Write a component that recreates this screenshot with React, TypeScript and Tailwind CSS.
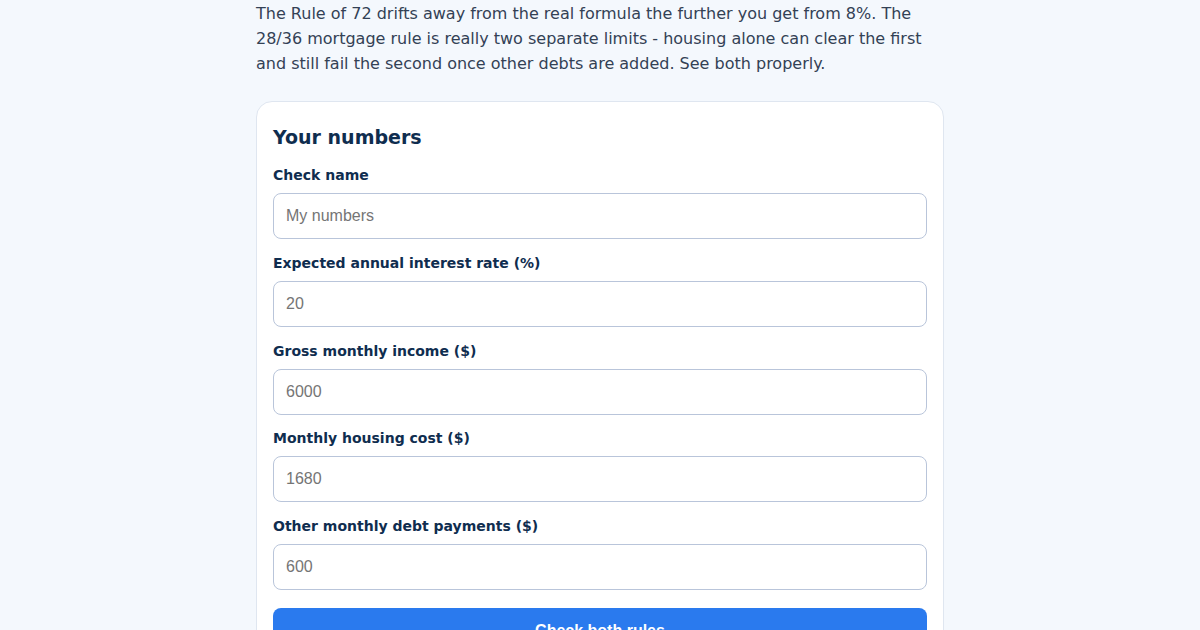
import React from 'react';

const fields = [
  { label: 'Check name', placeholder: 'My numbers' },
  { label: 'Expected annual interest rate (%)', placeholder: '20' },
  { label: 'Gross monthly income ($)', placeholder: '6000' },
  { label: 'Monthly housing cost ($)', placeholder: '1680' },
  { label: 'Other monthly debt payments ($)', placeholder: '600' },
];

const App = () => {
  return (
    <div className="min-h-screen bg-[#f4f8fd] font-['DejaVu_Sans',sans-serif]">
      <div className="w-[688px] mx-auto pt-px">
        {/* Intro */}
        <p className="text-[16px] leading-[25px] text-[#334155] mb-[25px]">
          The Rule of 72 drifts away from the real formula the further you get from 8%. The
          28/36 mortgage rule is really two separate limits - housing alone can clear the first
          and still fail the second once other debts are added. See both properly.
        </p>

        {/* Form card */}
        <div className="bg-white border border-[#dfe6f0] rounded-2xl px-4 pt-[21px] pb-4">
          <h2 className="text-[19px] leading-[28px] font-bold text-[#0f2d4f] mb-[14px]">
            Your numbers
          </h2>

          <div className="flex flex-col gap-[13.75px]">
            {fields.map((f) => (
              <div key={f.label}>
                <label className="block text-[14px] leading-[20px] font-bold text-[#0f2d4f] mb-2">
                  {f.label}
                </label>
                <input
                  type="text"
                  placeholder={f.placeholder}
                  className="block w-full h-[46px] px-[12px] rounded-lg border border-[#b9c5da] bg-white text-[16px] font-['Liberation_Sans',Arial,sans-serif] placeholder:text-[#757575] outline-none"
                />
              </div>
            ))}
          </div>

          <button className="mt-[18px] w-full h-[46px] rounded-lg bg-[#2a7aee] text-white text-[16px] font-bold font-['Liberation_Sans',Arial,sans-serif]">
            Check both rules
          </button>
        </div>
      </div>
    </div>
  );
};

export default App;
